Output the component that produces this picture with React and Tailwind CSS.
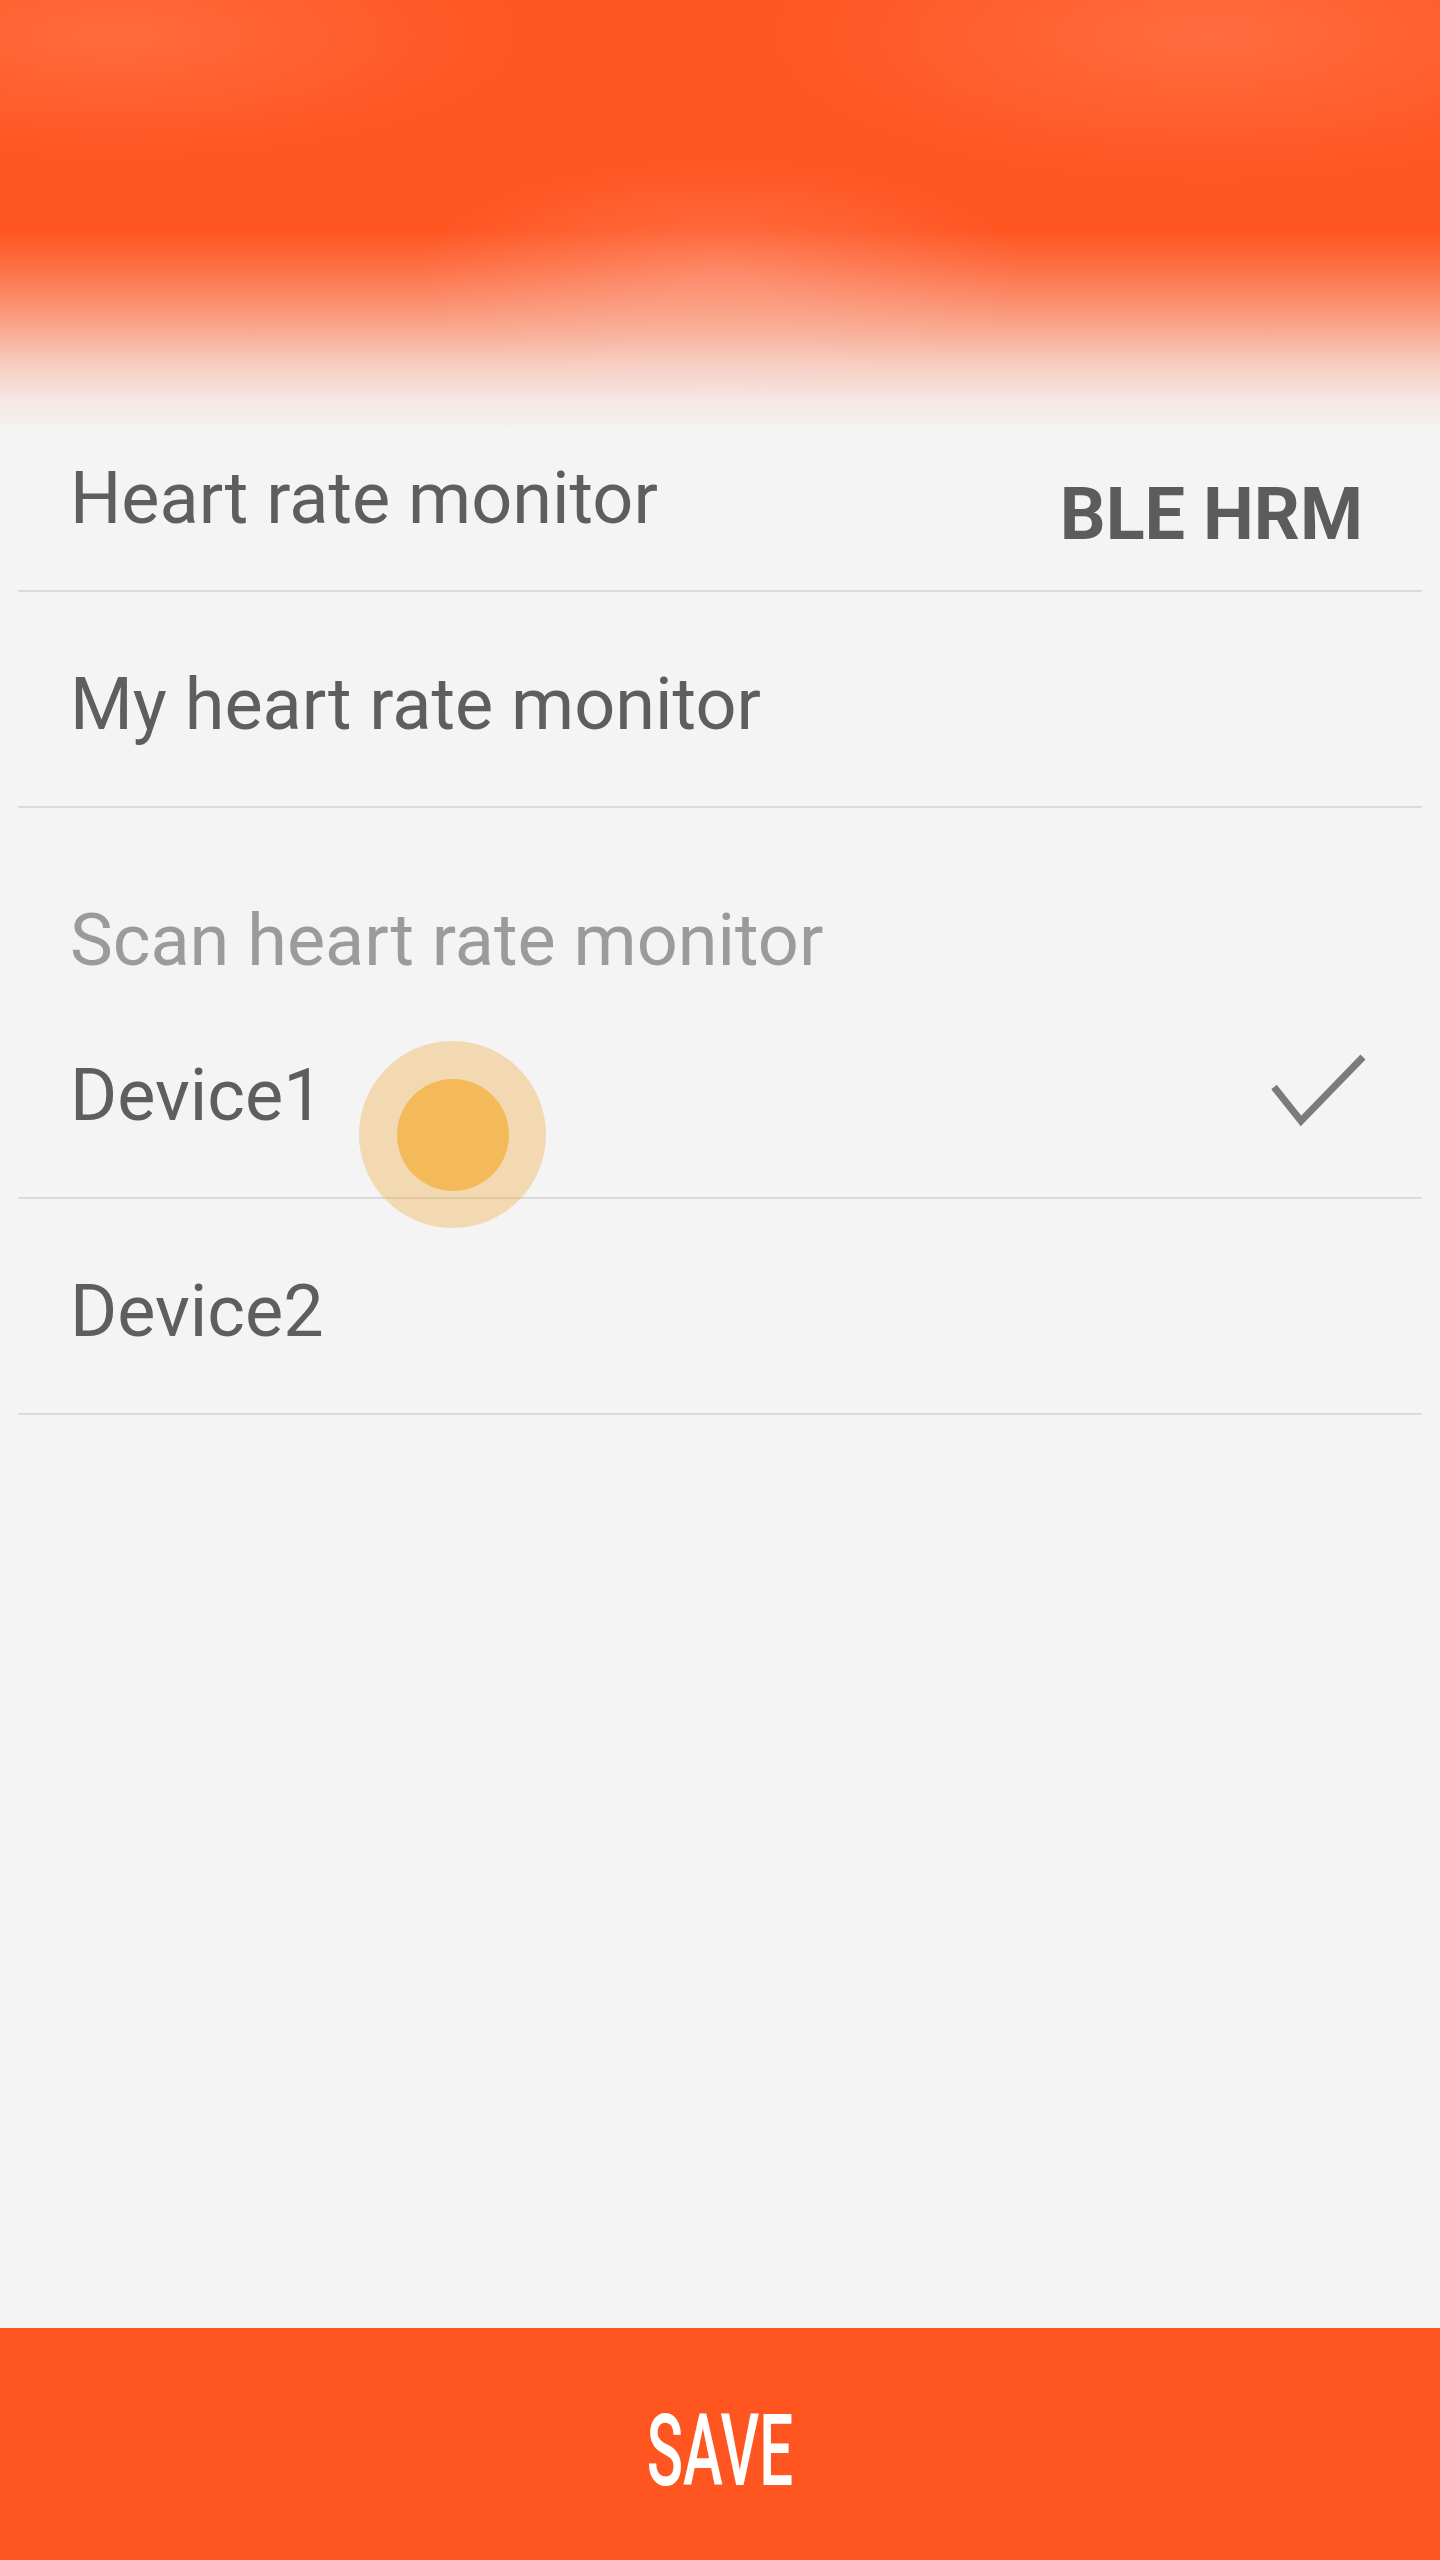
const rowText = "text-[72px] leading-[72px] text-[#5e5e5e]";

const CheckMark = () => (
  <svg width="104" height="80" viewBox="0 0 104 80" className="-mt-[10px] shrink-0">
    <polyline
      points="11,37 38,71 100,7"
      fill="none"
      stroke="#7b7b7b"
      strokeWidth="7"
      strokeLinecap="butt"
      strokeLinejoin="miter"
    />
  </svg>
);

const TouchRipple = () => (
  <div className="absolute left-[359px] top-[58px] w-[187px] h-[187px] rounded-full bg-[#f0a535]/35 flex items-center justify-center pointer-events-none">
    <div className="w-[112px] h-[112px] rounded-full bg-[#f4ba5a]" />
  </div>
);

export default function App() {
  return (
    <div className="relative w-[1440px] h-[2560px] bg-[#f4f4f4] flex flex-col font-['Roboto',sans-serif] overflow-hidden">
      {/* blurred orange header fading into the page */}
      <div className="relative h-[441px] shrink-0 bg-[#ff5521] bg-[radial-gradient(ellipse_at_8%_8%,#ff6b3e_0%,rgba(255,107,62,0)_22%),radial-gradient(ellipse_at_84%_8%,#ff6c40_0%,rgba(255,108,64,0)_26%),radial-gradient(ellipse_at_50%_62%,#ff7249_0%,rgba(255,114,73,0)_30%)]">
        <div className="absolute inset-0 bg-[linear-gradient(to_bottom,rgba(244,244,244,0)_0%,rgba(244,244,244,0)_52%,rgba(244,244,244,0.15)_60%,rgba(244,244,244,0.35)_68%,rgba(244,244,244,0.56)_76%,rgba(244,244,244,0.77)_83%,rgba(244,244,244,0.92)_91%,#f4f4f4_98%)]" />
      </div>

      <div className="mx-[18px] h-[151px] border-b-2 border-[#dadada] flex justify-between items-start pl-[52px] pr-[59px] shrink-0">
        <span className={`${rowText} mt-[22px]`}>Heart rate monitor</span>
        <span className="text-[72px] leading-[72px] font-bold text-[#5c5c5c] mt-[38px]">BLE HRM</span>
      </div>

      <div className="mx-[18px] h-[216px] border-b-2 border-[#dadada] pt-[77px] pl-[52px] shrink-0">
        <span className={rowText}>My heart rate monitor</span>
      </div>

      <div className="mx-[18px] h-[175px] pt-[97px] pl-[52px] shrink-0">
        <span className="text-[72px] leading-[72px] text-[#9b9b9b]">Scan heart rate monitor</span>
      </div>

      <div className="relative shrink-0">
        <div className="mx-[18px] h-[216px] border-b-2 border-[#dadada] pt-[77px] pl-[52px] pr-[55px] flex justify-between items-start">
          <span className={rowText}>Device1</span>
          <CheckMark />
        </div>
        <TouchRipple />
      </div>

      <div className="mx-[18px] h-[216px] border-b-2 border-[#dadada] pt-[77px] pl-[52px] shrink-0">
        <span className={rowText}>Device2</span>
      </div>

      <div className="flex-1" />

      <button className="h-[232px] shrink-0 bg-[#ff5621] flex items-center justify-center pt-[14px]">
        <span className="inline-block text-[100px] leading-[100px] font-medium text-white scale-x-[0.6]">SAVE</span>
      </button>
    </div>
  );
}
